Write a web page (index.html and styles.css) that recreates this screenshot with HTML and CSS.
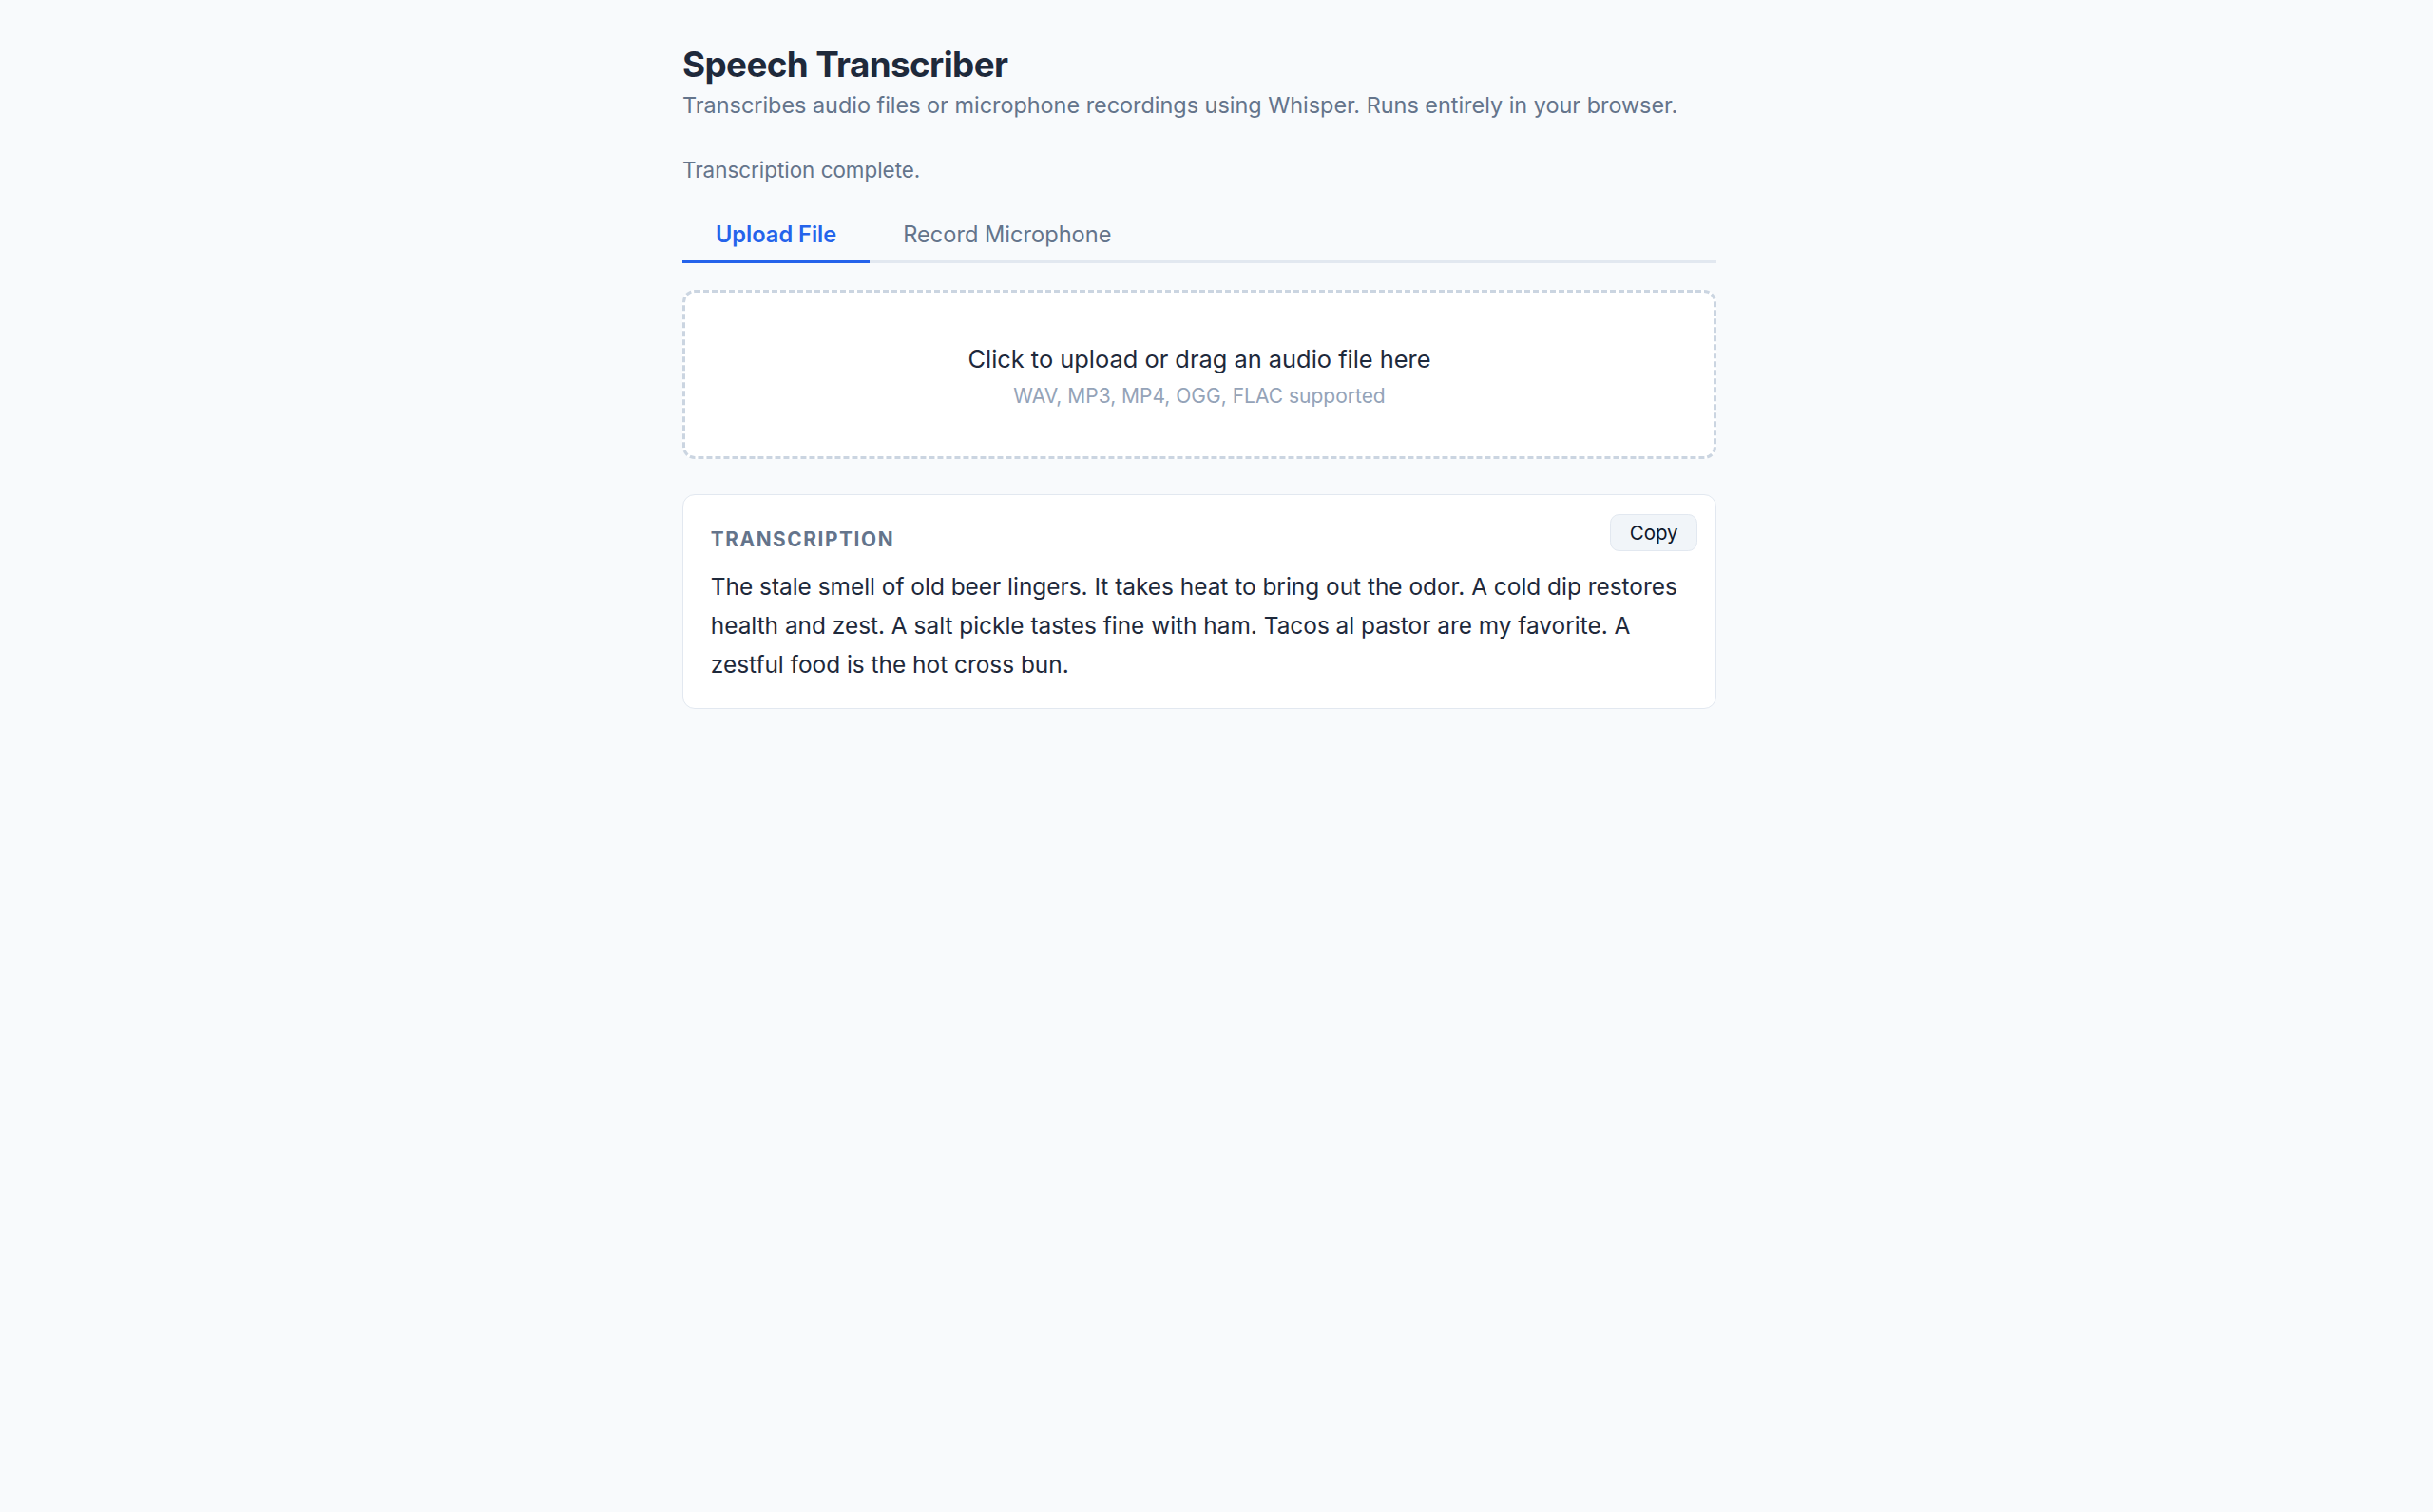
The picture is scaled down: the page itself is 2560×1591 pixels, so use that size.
FILE: index.html
```html
<!DOCTYPE html>
<html lang="en">
<head>
<meta charset="utf-8">
<title>Speech Transcriber</title>
<link rel="stylesheet" href="styles.css">
</head>
<body>
<main class="page">
  <h1 class="title">Speech Transcriber</h1>
  <p class="subtitle">Transcribes audio files or microphone recordings using Whisper. Runs entirely in your browser.</p>
  <p class="status">Transcription complete.</p>
  <nav class="tabs">
    <button class="tab tab-active">Upload File</button>
    <button class="tab">Record Microphone</button>
  </nav>
  <div class="dropzone">
    <div class="drop-main">Click to upload or drag an audio file here</div>
    <div class="drop-sub">WAV, MP3, MP4, OGG, FLAC supported</div>
  </div>
  <section class="card">
    <h2 class="card-label">TRANSCRIPTION</h2>
    <button class="copy-btn">Copy</button>
    <p class="transcript">The stale smell of old beer lingers. It takes heat to bring out the odor. A cold dip restores health and zest. A salt pickle tastes fine with ham. Tacos al pastor are my favorite. A zestful food is the hot cross bun.</p>
  </section>
</main>
</body>
</html>
```

FILE: styles.css
```css
* {
  box-sizing: border-box;
}

html, body {
  margin: 0;
  background: #f8fafc;
}

body {
  font-family: Inter, "Noto Sans", "Liberation Sans", sans-serif;
  color: #1e293b;
  padding: 45px 36px 0 0;
}

.page {
  width: 1088px;
  margin: 0 auto;
}

.title {
  margin: 0 0 6px;
  font-size: 36.8px;
  line-height: 46px;
  font-weight: 700;
  color: #1e293b;
  letter-spacing: -0.6px;
}

.subtitle {
  margin: 0 0 41px;
  font-size: 23.4px;
  line-height: 27px;
  color: #64748b;
}

.status {
  margin: 0 0 27px;
  font-size: 22.4px;
  line-height: 27px;
  color: #64748b;
}

.tabs {
  display: flex;
  border-bottom: 3px solid #e2e8f0;
  margin-bottom: 28px;
}

.tab {
  font-family: inherit;
  font-size: 23.6px;
  line-height: 29px;
  padding: 13px 35px;
  margin-bottom: -3px;
  border: 0;
  border-bottom: 3px solid transparent;
  background: none;
  color: #64748b;
  cursor: pointer;
}

.tab-active {
  color: #2563eb;
  font-weight: 600;
  border-bottom-color: #2563eb;
}

.dropzone {
  background: #ffffff;
  border: 3px dashed #cbd5e1;
  border-radius: 13px;
  padding: 53px 24px 51px;
  text-align: center;
}

.drop-main {
  font-size: 25.4px;
  line-height: 33px;
  color: #1e293b;
}

.drop-sub {
  margin-top: 10px;
  font-size: 21px;
  line-height: 25px;
  color: #94a3b8;
}

.card {
  position: relative;
  margin-top: 37px;
  background: #ffffff;
  border: 1.6px solid #e2e8f0;
  border-radius: 13px;
  padding: 34px 28.8px 25px;
}

.card-label {
  margin: 0 0 17px;
  font-size: 20.8px;
  line-height: 25px;
  font-weight: 700;
  letter-spacing: 1.6px;
  color: #64748b;
}

.copy-btn {
  position: absolute;
  top: 20.4px;
  right: 19.2px;
  font-family: Inter, "Liberation Sans", sans-serif;
  font-size: 20.5px;
  line-height: 24px;
  padding: 6.4px 19.2px;
  background: #f1f5f9;
  border: 1.6px solid #e2e8f0;
  border-radius: 9.6px;
  color: #0f172a;
  cursor: pointer;
}

.transcript {
  margin: 0;
  font-size: 24.4px;
  line-height: 41px;
  color: #1e293b;
}
```
